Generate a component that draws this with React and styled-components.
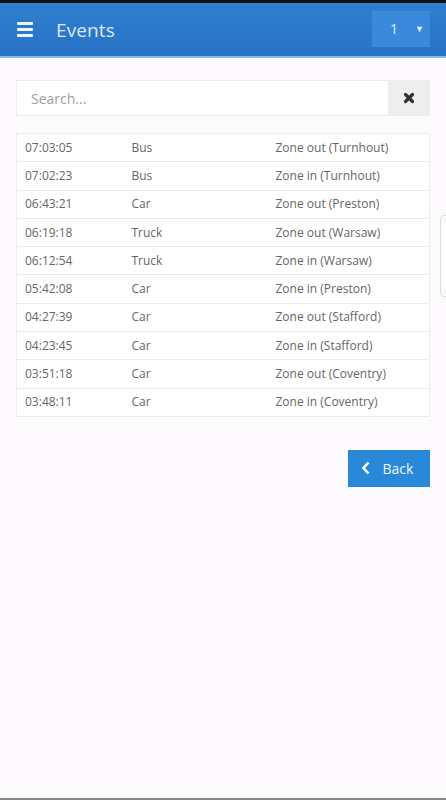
import React, { useState } from "react";
import styled, { createGlobalStyle } from "styled-components";

const GlobalStyle = createGlobalStyle`
  html, body {
    margin: 0;
    padding: 0;
    background: #fdfafd;
    font-family: "Open Sans", "Liberation Sans", sans-serif;
  }
`;

const events = [
  ["07:03:05", "Bus", "Zone out (Turnhout)"],
  ["07:02:23", "Bus", "Zone in (Turnhout)"],
  ["06:43:21", "Car", "Zone out (Preston)"],
  ["06:19:18", "Truck", "Zone out (Warsaw)"],
  ["06:12:54", "Truck", "Zone in (Warsaw)"],
  ["05:42:08", "Car", "Zone in (Preston)"],
  ["04:27:39", "Car", "Zone out (Stafford)"],
  ["04:23:45", "Car", "Zone in (Stafford)"],
  ["03:51:18", "Car", "Zone out (Coventry)"],
  ["03:48:11", "Car", "Zone in (Coventry)"],
];

const App = () => {
  const [query, setQuery] = useState("");

  return (
    <Page>
      <GlobalStyle />
      <TopStrip />
      <Header>
        <Burger>
          <span />
          <span />
          <span />
        </Burger>
        <Title>Events</Title>
        <PageSelect>
          <span>1</span>
          <Caret>▼</Caret>
        </PageSelect>
      </Header>

      <Content>
        <SearchBar>
          <input
            type="text"
            placeholder="Search..."
            value={query}
            onChange={(e) => setQuery(e.target.value)}
          />
          <ClearButton onClick={() => setQuery("")}>
            <svg width="12" height="12" viewBox="0 0 12 12">
              <path d="M2.5 2.5 L9.5 9.5 M9.5 2.5 L2.5 9.5" stroke="#333" strokeWidth="3.2" strokeLinecap="round" />
            </svg>
          </ClearButton>
        </SearchBar>

        <Table>
          <colgroup>
            <col style={{ width: 107 }} />
            <col style={{ width: 144 }} />
            <col />
          </colgroup>
          <tbody>
            {events.map((ev, i) => (
              <Row key={i}>
                <Cell>{ev[0]}</Cell>
                <Cell>{ev[1]}</Cell>
                <Cell>{ev[2]}</Cell>
              </Row>
            ))}
          </tbody>
        </Table>

        <Actions>
          <BackButton>
            <svg width="10" height="14" viewBox="0 0 10 14">
              <path d="M7.5 1.5 L2.5 7 L7.5 12.5" stroke="#fff" strokeWidth="2.6" fill="none" />
            </svg>
            Back
          </BackButton>
        </Actions>
      </Content>

      <SideTab />
      <BottomLine />
    </Page>
  );
};

const Page = styled.div`
  width: 446px;
  height: 800px;
  display: flex;
  flex-direction: column;
  background: #fdfafd;
  position: relative;
  overflow: hidden;
`;

const TopStrip = styled.div`
  height: 3px;
  background: #111;
`;

const Header = styled.div`
  height: 53px;
  display: flex;
  align-items: center;
  padding: 0 16px 0 17px;
  background: linear-gradient(#2f7fd0, #2872c4);
  border-bottom: 2px solid #7fbdf0;
`;

const Burger = styled.div`
  width: 16px;
  display: flex;
  flex-direction: column;
  gap: 3px;
  span {
    display: block;
    height: 3px;
    background: #eef4fb;
    border-radius: 1px;
  }
`;

const Title = styled.div`
  margin-left: 23px;
  flex: 1;
  color: #dde9f7;
  font-size: 19px;
  letter-spacing: 0.1px;
`;

const PageSelect = styled.div`
  width: 58px;
  height: 36px;
  margin-top: -2px;
  background: #3a89dc;
  display: flex;
  align-items: center;
  justify-content: space-between;
  padding: 0 6px 0 18px;
  box-sizing: border-box;
  color: #dfeefc;
  font-size: 14px;
`;

const Caret = styled.span`
  font-size: 9px;
  color: #eef5fd;
`;

const Content = styled.div`
  padding: 22px 16px 0 16px;
  display: flex;
  flex-direction: column;
`;

const SearchBar = styled.div`
  height: 36px;
  display: flex;
  border: 1px solid #ececec;
  box-sizing: border-box;
  input {
    flex: 1;
    border: none;
    outline: none;
    background: #fff;
    padding-left: 14px;
    font-family: "Open Sans", "Liberation Sans", sans-serif;
    font-size: 14px;
    color: #555;
    &::placeholder {
      color: #a0a0a0;
    }
  }
`;

const ClearButton = styled.button`
  width: 41px;
  border: none;
  background: #eeeeee;
  display: flex;
  align-items: center;
  justify-content: center;
  cursor: pointer;
  padding: 0;
`;

const Table = styled.table`
  margin-top: 17px;
  width: 100%;
  table-layout: fixed;
  border-collapse: collapse;
  background: #fff;
  border: 1px solid #ececec;
`;

const Row = styled.tr`
  height: 28.3px;
  border-top: 1px solid #ececec;
`;

const Cell = styled.td`
  padding: 0 0 1px 8px;
  font-size: 12px;
  color: #666;
  white-space: nowrap;
  overflow: hidden;
`;

const Actions = styled.div`
  display: flex;
  justify-content: flex-end;
  margin-top: 33px;
`;

const BackButton = styled.button`
  width: 82px;
  height: 37px;
  border: none;
  background: #2a88d8;
  color: #eef6fd;
  font-family: "Open Sans", "Liberation Sans", sans-serif;
  font-size: 14px;
  display: flex;
  align-items: center;
  justify-content: center;
  gap: 12px;
  padding: 0 4px 0 0;
  cursor: pointer;
`;

const SideTab = styled.div`
  position: absolute;
  right: -6px;
  top: 215px;
  width: 10px;
  height: 80px;
  border: 1px solid #dcdcdc;
  border-radius: 4px;
`;

const BottomLine = styled.div`
  position: absolute;
  left: 0;
  right: 0;
  bottom: 0;
  height: 2px;
  background: #888;
`;

export default App;
